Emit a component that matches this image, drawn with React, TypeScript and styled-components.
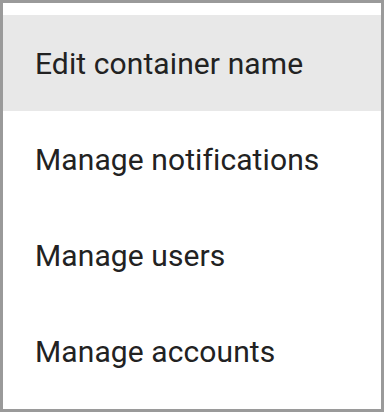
import React from 'react'
import styled, { createGlobalStyle } from 'styled-components'

const GlobalStyle = createGlobalStyle`
  html, body {
    margin: 0;
    padding: 0;
    background: #fff;
  }
  body {
    font-family: Roboto, "Noto Sans", sans-serif;
  }
`

const Menu = styled.ul`
  box-sizing: border-box;
  width: 384px;
  height: 412px;
  margin: 0;
  padding: 12px 0 10px;
  list-style: none;
  background: #fff;
  border: 3px solid #9a9a9a;
`

const MenuItem = styled.li<{ $active?: boolean }>`
  display: flex;
  align-items: center;
  height: 96px;
  padding: 0 32px;
  font-size: 30px;
  letter-spacing: 0.1px;
  color: #222;
  background: ${(p) => (p.$active ? '#e8e8e8' : 'transparent')};
  cursor: pointer;
`

const items = ['Edit container name', 'Manage notifications', 'Manage users', 'Manage accounts']

export default function App() {
  return (
    <>
      <GlobalStyle />
      <Menu>
        {items.map((label, i) => (
          <MenuItem key={label} $active={i === 0}>
            {label}
          </MenuItem>
        ))}
      </Menu>
    </>
  )
}
